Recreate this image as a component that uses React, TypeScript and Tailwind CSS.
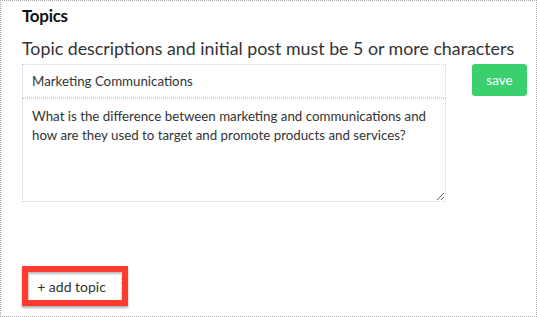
import { useState } from "react";

export default function App() {
  const [title, setTitle] = useState("Marketing Communications");
  const [post, setPost] = useState(
    "What is the difference between marketing and communications and how are they used to target and promote products and services?"
  );

  return (
    <div
      className="w-[537px] h-[317px] border border-dotted border-[#a8a8a8] bg-white flex flex-col pl-[21px] pt-[3px] text-[#222]"
      style={{ fontFamily: 'Lato, "Noto Sans", sans-serif' }}
    >
      <h2 className="text-[17px] font-bold leading-[24px] text-[#111] tracking-[-0.3px]">Topics</h2>

      <p className="mt-[8px] text-[17.8px] leading-[24px] text-[#333] whitespace-nowrap">
        Topic descriptions and initial post must be 5 or more characters
      </p>

      <div className="flex items-start mt-[4px]">
        {/* Topic fields */}
        <div className="w-[424px] flex flex-col">
          <input
            type="text"
            value={title}
            onChange={(e) => setTitle(e.target.value)}
            className="h-[34px] border border-dotted border-[#cfcfee] px-[9px] text-[13.3px] text-[#333] outline-none"
          />
          <textarea
            value={post}
            onChange={(e) => setPost(e.target.value)}
            className="h-[104px] border border-dotted border-[#cfcfee] px-[9px] pt-[8px] text-[13.3px] leading-[19px] text-[#333] outline-none resize-y"
          />
        </div>

        <button className="ml-[26px] w-[55px] h-[32px] rounded-[3px] bg-[#3ad06e] text-white text-[13.5px]">
          save
        </button>
      </div>

      {/* add topic, highlighted */}
      <div className="mt-auto mb-[10px] w-fit border-[6px] border-[#ff3b30] shadow-[0_2px_2px_rgba(0,0,0,0.3)]">
        <button className="w-[94px] h-[28px] bg-white text-[14px] text-[#333] pr-[6px] border-r border-dashed border-[#d8d8ee] shadow-[inset_1px_2px_2px_rgba(0,0,0,0.25)]">
          + add topic
        </button>
      </div>
    </div>
  );
}
